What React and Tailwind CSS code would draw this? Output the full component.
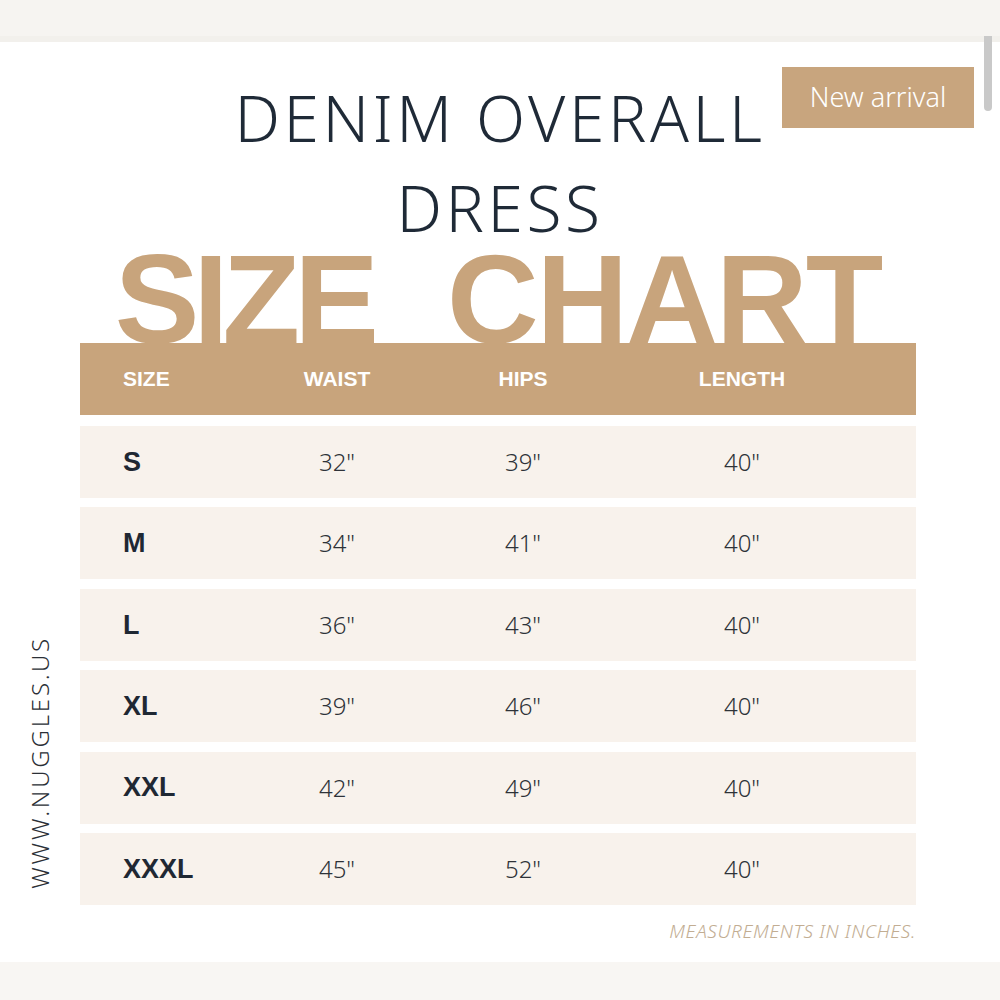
import React from "react";

const rows = [
  ["S", "32\"", "39\"", "40\""],
  ["M", "34\"", "41\"", "40\""],
  ["L", "36\"", "43\"", "40\""],
  ["XL", "39\"", "46\"", "40\""],
  ["XXL", "42\"", "49\"", "40\""],
  ["XXXL", "45\"", "52\"", "40\""],
];

export default function App() {
  return (
    <div className="relative w-[1000px] h-[1000px] bg-white overflow-hidden flex flex-col">
      <div className="h-[36px] bg-[#f6f4f1]" />
      <div className="h-[6px] bg-[#f2f0ec]" />
      <div className="absolute left-[984px] top-[36px] w-[8px] h-[75px] rounded-b-full bg-[#c9c9c9]" />

      <div className="relative flex-1 flex flex-col">
        <div className="absolute left-[782px] top-[25px] w-[192px] h-[61px] bg-[#c8a57e] flex items-center justify-center text-white text-[27px] font-light [font-family:'Noto_Sans',sans-serif]">
          New arrival
        </div>

        <div className="pt-[31px] flex flex-col items-center text-[#1f2a37] text-[64px] leading-[90px] font-light tracking-[3.6px] [font-family:'Noto_Sans',sans-serif]">
          <div>DENIM OVERALL</div>
          <div>DRESS</div>
        </div>

        <div className="mt-[2px] flex justify-center gap-[74px] text-[#c8a47c] text-[127px] leading-[88px] h-[88px] font-bold tracking-[-6px] [font-family:'Liberation_Sans',Arial,sans-serif]">
          <span className="-ml-[4px]">SIZE</span>
          <span className="tracking-[-2px]">CHART</span>
        </div>

        <div className="flex">
          <div className="w-[80px] flex items-end justify-center pb-[56px]">
            <div className="[writing-mode:vertical-rl] rotate-180 text-[24px] leading-none font-light tracking-[2.8px] text-[#2b2f36] [font-family:'Noto_Sans',sans-serif]">
              WWW.NUGGLES.US
            </div>
          </div>
          <div className="w-[836px] flex flex-col">
            <div className="h-[72px] bg-[#c8a47c] grid grid-cols-[180px_154px_218px_220px_1fr] items-center text-white text-[21px] font-bold [font-family:'Liberation_Sans',Arial,sans-serif]">
              <div className="pl-[43px]">SIZE</div>
              <div className="text-center">WAIST</div>
              <div className="text-center">HIPS</div>
              <div className="text-center">LENGTH</div>
              <div />
            </div>
            <div className="mt-[11px] flex flex-col gap-[9.4px]">
              {rows.map((r) => (
                <div
                  key={r[0]}
                  className="h-[72px] bg-[#f8f2ec] grid grid-cols-[180px_154px_218px_220px_1fr] items-center"
                >
                  <div className="pl-[43px] text-[27px] font-bold text-[#1f2833] [font-family:'Liberation_Sans',Arial,sans-serif]">
                    {r[0]}
                  </div>
                  <div className="text-center text-[24px] font-light text-[#2e3238] [font-family:'Noto_Sans',sans-serif]">{r[1]}</div>
                  <div className="text-center text-[24px] font-light text-[#2e3238] [font-family:'Noto_Sans',sans-serif]">{r[2]}</div>
                  <div className="text-center text-[24px] font-light text-[#2e3238] [font-family:'Noto_Sans',sans-serif]">{r[3]}</div>
                  <div />
                </div>
              ))}
            </div>
            <div className="mt-[12px] text-right text-[19px] leading-[28px] italic font-light tracking-[0.6px] text-[#c2ad92] [font-family:'Noto_Sans',sans-serif]">
              MEASUREMENTS IN INCHES.
            </div>
          </div>
        </div>
      </div>

      <div className="h-[38px] bg-[#f8f6f3]" />
    </div>
  );
}
